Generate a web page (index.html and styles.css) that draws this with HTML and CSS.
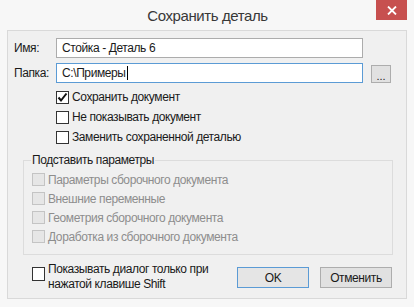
FILE: index.html
```html
<!DOCTYPE html>
<html lang="ru">
<head>
    <meta charset="UTF-8">
    <title>Сохранить деталь</title>
    <link rel="stylesheet" href="styles.css">
</head>
<body>
    <!-- BEGIN::window -->
    <div class="window">
        <!-- BEGIN::titlebar -->
        <div class="titlebar">
            <span></span>
            <div class="title">Сохранить деталь</div>
            <div class="close-wrap">
                <div class="close">
                    <svg width="10" height="9" viewBox="0 0 10 9">
                        <path d="M1 0.5 L9 8.5 M9 0.5 L1 8.5" stroke="#fff" stroke-width="1.8" fill="none"/>
                    </svg>
                </div>
            </div>
        </div>
        <!-- END::titlebar -->

        <!-- BEGIN::client -->
        <div class="client">
            <div class="fields">
                <div class="field-label">Имя:</div>
                <div class="textbox">Стойка - Деталь 6</div>
                <span></span>
                <div class="field-label">Папка:</div>
                <div class="textbox focused">C:\Примеры<span class="caret"></span></div>
                <div class="btn browse">...</div>
            </div>

            <div class="options">
                <div class="check-row">
                    <span class="box">
                        <svg width="11" height="11" viewBox="0 0 11 11">
                            <path d="M1.5 5.5 L4 8.5 L9.5 1.5" stroke="#111" stroke-width="2" fill="none"/>
                        </svg>
                    </span>
                    Сохранить документ
                </div>
                <div class="check-row"><span class="box"></span>Не показывать документ</div>
                <div class="check-row"><span class="box"></span>Заменить сохраненной деталью</div>
            </div>

            <!-- BEGIN::group -->
            <fieldset class="group">
                <legend>Подставить параметры</legend>
                <div class="check-row disabled"><span class="box"></span>Параметры сборочного документа</div>
                <div class="check-row disabled"><span class="box"></span>Внешние переменные</div>
                <div class="check-row disabled"><span class="box"></span>Геометрия сборочного документа</div>
                <div class="check-row disabled"><span class="box"></span>Доработка из сборочного документа</div>
            </fieldset>
            <!-- END::group -->

            <div class="footer">
                <div class="shift-option">
                    <span class="box"></span>
                    <div class="shift-text">Показывать диалог только при<br>нажатой клавише Shift</div>
                </div>
                <div class="btn dialog-btn default">OK</div>
                <div class="btn dialog-btn">Отменить</div>
            </div>
        </div>
        <!-- END::client -->
    </div>
    <!-- END::window -->
</body>
</html>
```

FILE: styles.css
```css
*{
    margin: 0;
    padding: 0;
    box-sizing: border-box;
    font-family: 'Liberation Sans', Arial, sans-serif;
}

body{
    background: #f7f7f7;
}

.window{
    width: 414px;
    height: 307px;
    background: #f7f7f7;
    font-size: 12px;
    letter-spacing: -0.4px;
    color: #1a1a1a;
}

.titlebar{
    height: 30px;
    display: grid;
    grid-template-columns: 1fr auto 1fr;
}

.title{
    font-size: 15px;
    line-height: 31px;
    color: #383838;
    padding-left: 1px;
}

.close-wrap{
    display: flex;
    justify-content: flex-end;
    padding-right: 7px;
}

.close{
    width: 31px;
    height: 20px;
    background: #c7504f;
    display: flex;
    justify-content: center;
    align-items: center;
}

.client{
    margin: 0 7px;
    height: 269px;
    background: #f0f0f0;
    border: 1px solid #d9d9d9;
    padding: 7px 14px 0 6px;
}

.fields{
    display: grid;
    grid-template-columns: 34px 307px 20px;
    grid-auto-rows: 20px;
    column-gap: 8px;
    row-gap: 5px;
    align-items: center;
}

.textbox{
    height: 20px;
    background: #fff;
    border: 1px solid #acacac;
    padding-left: 5px;
    line-height: 18px;
    display: flex;
    align-items: center;
}

.textbox.focused{
    border-color: #5b9bd5;
}

.caret{
    width: 1px;
    height: 14px;
    background: #000;
    margin-left: 1px;
}

.btn{
    background: #e1e1e1;
    border: 1px solid #adadad;
    display: flex;
    justify-content: center;
    align-items: center;
}

.browse{
    height: 18px;
    align-self: end;
    line-height: 18px;
    padding-top: 3px;
    font-size: 11px;
    letter-spacing: 0;
}

.options{
    margin: 4px 0 0 42px;
}

.check-row{
    height: 20px;
    display: flex;
    align-items: center;
}

.box{
    width: 13px;
    height: 13px;
    background: #fff;
    border: 1px solid #333;
    margin-right: 3px;
    display: flex;
    justify-content: center;
    align-items: center;
    flex-shrink: 0;
}

.group{
    margin: 6px 0 0 9px;
    width: 370px;
    border: 1px solid #dcdcdc;
    padding: 2px 8px 8px 8px;
}

.group legend{
    line-height: 15px;
    padding: 0 1px;
    margin-left: -1px;
}

.check-row.disabled{
    height: 19px;
    color: #8d8d8d;
}

.check-row.disabled .box{
    background: #e6e6e6;
    border-color: #c4c4c4;
    margin-right: 3px;
}

.footer{
    margin: 7px 0 0 18px;
    display: flex;
    align-items: flex-start;
}

.shift-option{
    flex: 1;
    display: flex;
    align-items: flex-start;
}

.shift-option .box{
    margin-top: 5px;
    width: 13px;
    height: 14px;
}

.shift-text{
    line-height: 15px;
}

.dialog-btn{
    width: 72px;
    height: 21px;
    margin-top: 5px;
    margin-left: 11px;
}

.dialog-btn.default{
    border-color: #5b9bd5;
    background: #e5e5e5;
}
```
